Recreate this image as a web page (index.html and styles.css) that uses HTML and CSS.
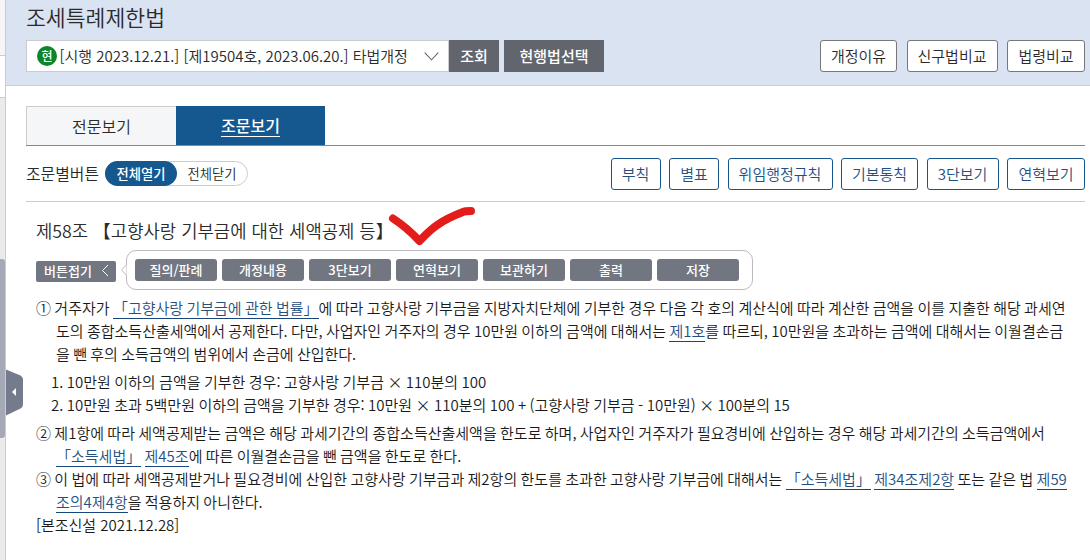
FILE: index.html
```html
<!DOCTYPE html>
<html lang="ko">
<head>
  <meta charset="UTF-8">
  <meta name="viewport" content="width=device-width, initial-scale=1.0">
  <title>조세특례제한법</title>
  <link rel="stylesheet" href="styles.css">
</head>
<body>
  <div class="page">
    <div class="side">
      <div class="side-top"></div>
      <div class="side-mid"></div>
      <div class="side-track"><div class="side-thumb"></div></div>
    </div>
    <div class="main">
      <svg class="side-handle" width="17" height="48" viewBox="0 0 17 48">
        <path d="M0 0.5L14.5 6.5Q17 8 17 10.5V35.5Q17 38.5 14.5 39.5L0 46.5Z" fill="#747b8c"/>
        <path d="M10 19V27L6 23Z" fill="#fff"/>
      </svg>

      <div class="header">
        <h1>조세특례제한법</h1>
        <div class="header-row">
          <div class="select">
            <span class="badge">현</span>
            <span class="select-text">[시행 2023.12.21.] [제19504호, 2023.06.20.] 타법개정</span>
            <svg class="arrow" width="15" height="9" viewBox="0 0 15 9"><path d="M0.7 0.7L7.5 7.8L14.3 0.7" fill="none" stroke="#666" stroke-width="1.1"/></svg>
          </div>
          <button class="btn-dark search">조회</button>
          <button class="btn-dark current">현행법선택</button>
          <div class="header-btns">
            <button class="btn-line w77">개정이유</button>
            <button class="btn-line w91">신구법비교</button>
            <button class="btn-line w78">법령비교</button>
          </div>
        </div>
      </div>

      <div class="content">
        <div class="tabs">
          <div class="tab">전문보기</div>
          <div class="tab active"><span>조문보기</span></div>
        </div>

        <div class="tools">
          <span class="tools-label">조문별버튼</span>
          <div class="toggle">
            <span class="on">전체열기</span>
            <span class="off">전체닫기</span>
          </div>
          <div class="tool-btns">
            <button class="btn-line blue w50">부칙</button>
            <button class="btn-line blue w50">별표</button>
            <button class="btn-line blue w105">위임행정규칙</button>
            <button class="btn-line blue w77">기본통칙</button>
            <button class="btn-line blue w72">3단보기</button>
            <button class="btn-line blue w78">연혁보기</button>
          </div>
        </div>

        <div class="article">
          <h2>제58조 【고향사랑 기부금에 대한 세액공제 등】
            <svg class="check" width="90" height="42" viewBox="0 0 90 42"><path d="M6 12.500C13 17 25 27 32.500 35C43 24 52 15 76 6C78 5 81 5 84 5" fill="none" stroke="#e51c1c" stroke-width="8" stroke-linecap="round" stroke-linejoin="round"/></svg>
          </h2>
          <div class="article-btns">
            <button class="btn-small fold">버튼접기
              <svg width="8" height="13" viewBox="0 0 8 13"><path d="M7 1L1.500 6.500L7 12" fill="none" stroke="#fff" stroke-width="1"/></svg>
            </button>
            <div class="bubble">
              <svg class="bubble-tip" width="6" height="14" viewBox="0 0 6 14"><path d="M5.500 0V1.500L0.700 7L5.500 12.500V14" fill="#fff" stroke="#bbb"/></svg>
              <button class="btn-small">질의/판례</button>
              <button class="btn-small">개정내용</button>
              <button class="btn-small">3단보기</button>
              <button class="btn-small">연혁보기</button>
              <button class="btn-small">보관하기</button>
              <button class="btn-small">출력</button>
              <button class="btn-small">저장</button>
            </div>
          </div>

          <div class="law">
            <p class="para">① 거주자가 <a href="#">「고향사랑 기부금에 관한 법률」</a>에 따라 고향사랑 기부금을 지방자치단체에 기부한 경우 다음 각 호의 계산식에 따라 계산한 금액을 이를 지출한 해당 과세연<br>도의 종합소득산출세액에서 공제한다. 다만, 사업자인 거주자의 경우 10만원 이하의 금액에 대해서는 <a href="#">제1호</a>를 따르되, 10만원을 초과하는 금액에 대해서는 이월결손금<br>을 뺀 후의 소득금액의 범위에서 손금에 산입한다.</p>
            <p class="item">1. 10만원 이하의 금액을 기부한 경우: 고향사랑 기부금 × 110분의 100<br>2. 10만원 초과 5백만원 이하의 금액을 기부한 경우: 10만원 × 110분의 100 + (고향사랑 기부금 - 10만원) × 100분의 15</p>
            <p class="para">② 제1항에 따라 세액공제받는 금액은 해당 과세기간의 종합소득산출세액을 한도로 하며, 사업자인 거주자가 필요경비에 산입하는 경우 해당 과세기간의 소득금액에서<br><a href="#">「소득세법」</a> <a href="#">제45조</a>에 따른 이월결손금을 뺀 금액을 한도로 한다.</p>
            <p class="para">③ 이 법에 따라 세액공제받거나 필요경비에 산입한 고향사랑 기부금과 제2항의 한도를 초과한 고향사랑 기부금에 대해서는 <a href="#">「소득세법」</a> <a href="#">제34조제2항</a> 또는 같은 법 <a href="#">제59<br>조의4제4항</a>을 적용하지 아니한다.</p>
            <p class="note">[본조신설 2021.12.28]</p>
          </div>
        </div>
      </div>
    </div>
  </div>
</body>
</html>
```
FILE: styles.css
```css
* {
  box-sizing: border-box;
}
body {
  margin: 0;
  font-family: "Noto Sans CJK KR", sans-serif;
  font-size: 15px;
  font-weight: 350;
  color: #2a2a2a;
  background: #fff;
  overflow: hidden;
}
h1, h2, p {
  margin: 0;
  font-weight: 350;
}
button {
  font-family: inherit;
  font-size: 15px;
  font-weight: 350;
  padding: 0;
  border: 0;
  white-space: nowrap;
}
.page {
  display: flex;
  height: 560px;
}
.side {
  width: 5px;
  display: flex;
  flex-direction: column;
}
.side-top {
  height: 56px;
  background: #f5f5f5;
  border-bottom: 1px solid #ccc;
}
.side-mid {
  height: 42px;
  border-bottom: 1px solid #ccc;
}
.side-track {
  flex: 1;
  background: #ebebeb;
  padding-top: 161px;
}
.side-thumb {
  height: 179px;
  background: #a4a9b5;
  border-radius: 0 3px 3px 0;
}
.main {
  position: relative;
  flex: 1;
  border-left: 1px solid #ccc;
}
.side-handle {
  position: absolute;
  left: 0;
  top: 369px;
}

/* header */
.header {
  height: 86px;
  padding: 2px 5px 0 20px;
  background: #dae3f2;
  border-bottom: 1px solid #ccc;
}
h1 {
  height: 38px;
  line-height: 29px;
  font-size: 21.6px;
}
.header-row {
  display: flex;
}
.select {
  display: flex;
  align-items: center;
  width: 423px;
  height: 32px;
  padding: 0 9px 0 10px;
  background: #fff;
  border: 1px solid #ccc;
}
.badge {
  width: 20px;
  height: 20px;
  border-radius: 50%;
  background: #0d8528;
  color: #fff;
  font-size: 12px;
  font-weight: 500;
  line-height: 19px;
  text-align: center;
}
.select-text {
  margin-left: 2.5px;
  padding-bottom: 2px;
  white-space: nowrap;
}
.arrow {
  margin-left: auto;
}
.btn-dark {
  height: 32px;
  padding-bottom: 2px;
  background: #62656d;
  color: #fff;
  font-weight: 500;
}
.search {
  width: 50px;
}
.current {
  width: 100px;
  margin-left: 5px;
}
.header-btns {
  display: flex;
  gap: 9.5px;
  margin-left: auto;
}
.btn-line {
  height: 32px;
  padding-bottom: 1px;
  background: #fff;
  border: 1px solid #777;
  border-radius: 3px;
  color: #2a2a2a;
}
.blue {
  border-color: #17558b;
  color: #24507f;
}
.w50 { width: 50px; }
.w72 { width: 72px; }
.w77 { width: 77px; }
.w78 { width: 78px; }
.w91 { width: 91px; }
.w105 { width: 105px; }

/* tabs */
.content {
  padding: 20px 5px 0 20px;
}
.tabs {
  display: flex;
  height: 40px;
  border-bottom: 1px solid #888;
}
.tab {
  width: 150px;
  height: 39px;
  line-height: 39px;
  font-size: 16px;
  text-align: center;
  background: #f5f6f8;
  border: 1px solid #ccc;
  border-width: 1px 0 0 1px;
}
.tab.active {
  width: 149px;
  border: 0;
  background: #15588f;
  color: #fff;
  font-weight: 500;
}
.tab.active span {
  display: inline-block;
  height: 31px;
  border-bottom: 1px solid #fff;
}

/* buttons above the article */
.tools {
  display: flex;
  align-items: center;
  height: 56px;
  border-bottom: 1px solid #ccc;
}
.tools-label {
  width: 73px;
  font-size: 15.9px;
  line-height: 22px;
  white-space: nowrap;
}
.toggle {
  display: flex;
  width: 143px;
  height: 25px;
  margin-left: 6px;
  border: 1px solid #ccc;
  border-radius: 13px;
  font-size: 13.3px;
  line-height: 23px;
  text-align: center;
}
.on {
  width: 72px;
  height: 25px;
  margin: -1px 0 0 -1px;
  line-height: 25px;
  border-radius: 13px;
  background: #15588f;
  color: #fff;
  font-weight: 500;
}
.off {
  flex: 1;
}
.tool-btns {
  display: flex;
  gap: 8.5px;
  margin-left: auto;
}

/* article */
.article {
  padding-left: 10px;
}
h2 {
  position: relative;
  height: 48px;
  line-height: 57px;
  font-size: 17.75px;
  white-space: nowrap;
}
.check {
  position: absolute;
  left: 351px;
  top: 4px;
}
.article-btns {
  display: flex;
  align-items: center;
  height: 39px;
}
.btn-small {
  width: 82px;
  height: 22px;
  padding-bottom: 1px;
  border-radius: 3px;
  background: #727681;
  color: #fff;
  font-size: 13px;
  font-weight: 500;
}
.fold {
  display: flex;
  align-items: center;
  justify-content: center;
  gap: 9px;
  width: 80px;
  height: 21px;
  margin-top: 3px;
  padding-left: 1px;
  border-radius: 2px;
}
.bubble {
  position: relative;
  display: flex;
  align-items: center;
  gap: 5px;
  width: 627px;
  height: 40px;
  margin-left: 10px;
  padding-left: 8px;
  border: 1px solid #bbb;
  border-radius: 10px;
}
.bubble-tip {
  position: absolute;
  left: -6px;
  top: 12px;
}
.law {
  padding-top: 7px;
  line-height: 23px;
  word-spacing: -0.85px;
  color: #1a1a1a;
  white-space: nowrap;
}
.para {
  padding-left: 20px;
  text-indent: -20px;
}
.item {
  padding: 5px 0 5px 15px;
  word-spacing: -0.75px;
}
.note {
  word-spacing: 0;
}
.law a {
  color: #24507f;
  text-decoration: none;
  border-bottom: 1px solid #17457c;
}
```
